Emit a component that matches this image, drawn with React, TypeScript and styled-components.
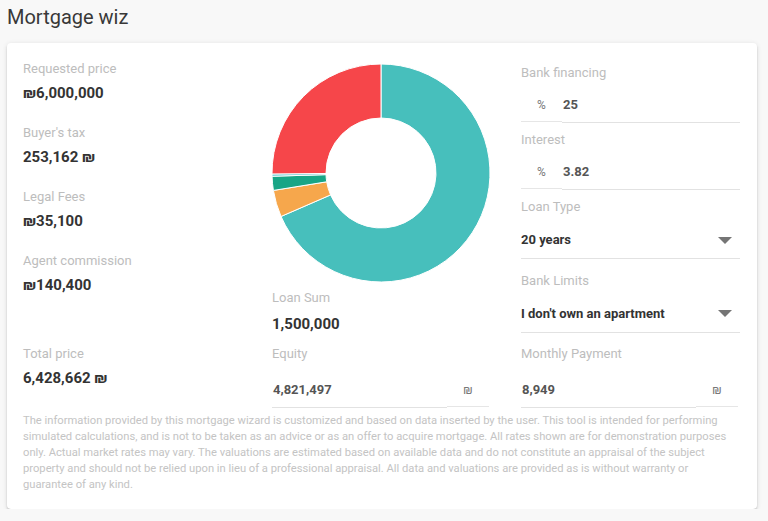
import React from "react";
import styled, { createGlobalStyle } from "styled-components";

const GlobalStyle = createGlobalStyle`
  html, body { margin: 0; padding: 0; }
  body {
    background: #f8f8f8;
    font-family: Roboto, "Noto Sans", "DejaVu Sans", sans-serif;
    color: #333;
  }
  * { box-sizing: border-box; }
`;

const Page = styled.div`
  padding: 5px 11px 0 7px;
`;

const Title = styled.h1`
  margin: 0 0 13px;
  font-size: 20px;
  line-height: 25px;
  font-weight: 400;
  color: #383838;
`;

const Card = styled.div`
  background: #fff;
  border-radius: 4px;
  padding: 18px 16px 16px;
  box-shadow: 0px 3px 1px -2px rgba(0, 0, 0, 0.2),
    0px 2px 2px 0px rgba(0, 0, 0, 0.14), 0px 1px 5px 0px rgba(0, 0, 0, 0.12);
`;

const Grid = styled.div`
  display: grid;
  grid-template-columns: repeat(3, 1fr);
  column-gap: 29px;
  align-items: start;
`;

const Column = styled.div<{ $offset?: number }>`
  display: flex;
  flex-direction: column;
  margin-top: ${(p) => p.$offset ?? 0}px;
`;

const Label = styled.div`
  font-size: 13px;
  line-height: 16px;
  color: #bdbdbd;
`;

const Stat = styled.div<{ $gap?: number; $space?: number }>`
  display: flex;
  flex-direction: column;
  gap: ${(p) => p.$gap ?? 6}px;
  margin-bottom: ${(p) => p.$space ?? 0}px;
`;

const StatValue = styled.div`
  font-size: 15px;
  line-height: 20px;
  font-weight: 700;
  color: #333;
`;

const Field = styled.div<{ $space?: number }>`
  display: flex;
  flex-direction: column;
  margin-bottom: ${(p) => p.$space ?? 0}px;
`;

const InputRow = styled.div<{ $trim?: number }>`
  display: flex;
  align-items: stretch;
  margin-right: ${(p) => p.$trim ?? 1}px;
`;

const InputValue = styled.div<{ $top: number }>`
  flex: 1;
  padding: ${(p) => p.$top}px 0 9px 1px;
  font-size: 13px;
  line-height: 16px;
  font-weight: 700;
  color: #555;
  border-bottom: 1px solid #e2e2e2;
`;

const Adornment = styled.div<{ $top: number; $w: number }>`
  width: ${(p) => p.$w}px;
  flex: none;
  text-align: center;
  padding: ${(p) => p.$top}px 0 8px;
  margin-bottom: 1px;
  font-size: 12px;
  line-height: 16px;
  color: #777;
  border-bottom: 1px solid #e6e6e6;
`;

const SelectRow = styled.div`
  display: flex;
  align-items: center;
  justify-content: space-between;
  padding: 17px 8px 10px 0;
  margin-right: 1px;
  border-bottom: 1px solid #e2e2e2;
`;

const SelectValue = styled.div`
  font-size: 13px;
  line-height: 16px;
  font-weight: 700;
  color: #333;
`;

const ChartBox = styled.div`
  width: 218px;
  height: 218px;
  margin-bottom: 8px;
`;

const Disclaimer = styled.p`
  margin: 4.5px 8px 0 0;
  font-size: 11.2px;
  line-height: 16px;
  color: #c4c4c4;
`;

const Arrow = () => (
  <svg width="14" height="7" viewBox="0 0 14 7">
    <polygon points="0,0 14,0 7,7" fill="#757575" />
  </svg>
);

type Seg = { from: number; to: number; color: string };

const segments: Seg[] = [
  { from: 0, to: 246.5, color: "#47bfbc" },
  { from: 246.5, to: 260.8, color: "#f6a74c" },
  { from: 260.8, to: 268.3, color: "#18a586" },
  { from: 268.3, to: 269.5, color: "#4fc4cc" },
  { from: 269.5, to: 360, color: "#f6464a" },
];

const polar = (cx: number, cy: number, r: number, deg: number) => {
  const a = (deg * Math.PI) / 180;
  return [cx + r * Math.sin(a), cy - r * Math.cos(a)];
};

const arcPath = (s: Seg, cx: number, cy: number, ro: number, ri: number) => {
  const [x1, y1] = polar(cx, cy, ro, s.from);
  const [x2, y2] = polar(cx, cy, ro, s.to);
  const [x3, y3] = polar(cx, cy, ri, s.to);
  const [x4, y4] = polar(cx, cy, ri, s.from);
  const large = s.to - s.from > 180 ? 1 : 0;
  return `M${x1},${y1} A${ro},${ro} 0 ${large} 1 ${x2},${y2} L${x3},${y3} A${ri},${ri} 0 ${large} 0 ${x4},${y4} Z`;
};

const Donut = () => (
  <svg width="218" height="218" viewBox="0 0 218 218">
    {segments.map((s, i) => (
      <path
        key={i}
        d={arcPath(s, 109, 109, 109, 55)}
        fill={s.color}
        stroke="#fff"
        strokeWidth={1}
        strokeLinejoin="miter"
      />
    ))}
  </svg>
);

const TextField = ({
  label,
  value,
  prefix,
  suffix,
  top,
  space,
}: {
  label: string;
  value: string;
  prefix?: string;
  suffix?: string;
  top: number;
  space?: number;
}) => (
  <Field $space={space}>
    <Label>{label}</Label>
    <InputRow $trim={suffix ? 3 : 1}>
      {prefix && (
        <Adornment $top={top} $w={41}>
          {prefix}
        </Adornment>
      )}
      <InputValue $top={top}>{value}</InputValue>
      {suffix && (
        <Adornment $top={top} $w={42}>
          {suffix}
        </Adornment>
      )}
    </InputRow>
  </Field>
);

const SelectField = ({
  label,
  value,
  space,
}: {
  label: string;
  value: string;
  space?: number;
}) => (
  <Field $space={space}>
    <Label>{label}</Label>
    <SelectRow>
      <SelectValue>{value}</SelectValue>
      <Arrow />
    </SelectRow>
  </Field>
);

export default function App() {
  return (
    <>
      <GlobalStyle />
      <Page>
        <Title>Mortgage wiz</Title>
        <Card>
          <Grid>
            <Column>
              <Stat $space={22}>
                <Label>Requested price</Label>
                <StatValue>₪6,000,000</StatValue>
              </Stat>
              <Stat $space={22}>
                <Label>Buyer's tax</Label>
                <StatValue>253,162 ₪</StatValue>
              </Stat>
              <Stat $space={22}>
                <Label>Legal Fees</Label>
                <StatValue>₪35,100</StatValue>
              </Stat>
              <Stat>
                <Label>Agent commission</Label>
                <StatValue>₪140,400</StatValue>
              </Stat>
            </Column>
            <Column $offset={3}>
              <ChartBox>
                <Donut />
              </ChartBox>
              <Stat $gap={8}>
                <Label>Loan Sum</Label>
                <StatValue>1,500,000</StatValue>
              </Stat>
            </Column>
            <Column $offset={4}>
              <TextField label="Bank financing" prefix="%" value="25" top={16} space={9} />
              <TextField label="Interest" prefix="%" value="3.82" top={16} space={9} />
              <SelectField label="Loan Type" value="20 years" space={13.5} />
              <SelectField label="Bank Limits" value="I don't own an apartment" space={13.5} />
            </Column>
            <Column>
              <Stat>
                <Label>Total price</Label>
                <StatValue>6,428,662 ₪</StatValue>
              </Stat>
            </Column>
            <Column>
              <TextField label="Equity" value="4,821,497" suffix="₪" top={20} />
            </Column>
            <Column>
              <TextField label="Monthly Payment" value="8,949" suffix="₪" top={20} />
            </Column>
          </Grid>
          <Disclaimer>
            The information provided by this mortgage wizard is customized and based on data
            inserted by the user. This tool is intended for performing simulated calculations, and
            is not to be taken as an advice or as an offer to acquire mortgage. All rates shown are
            for demonstration purposes only. Actual market rates may vary. The valuations are
            estimated based on available data and do not constitute an appraisal of the subject
            property and should not be relied upon in lieu of a professional appraisal. All data and
            valuations are provided as is without warranty or guarantee of any kind.
          </Disclaimer>
        </Card>
      </Page>
    </>
  );
}
